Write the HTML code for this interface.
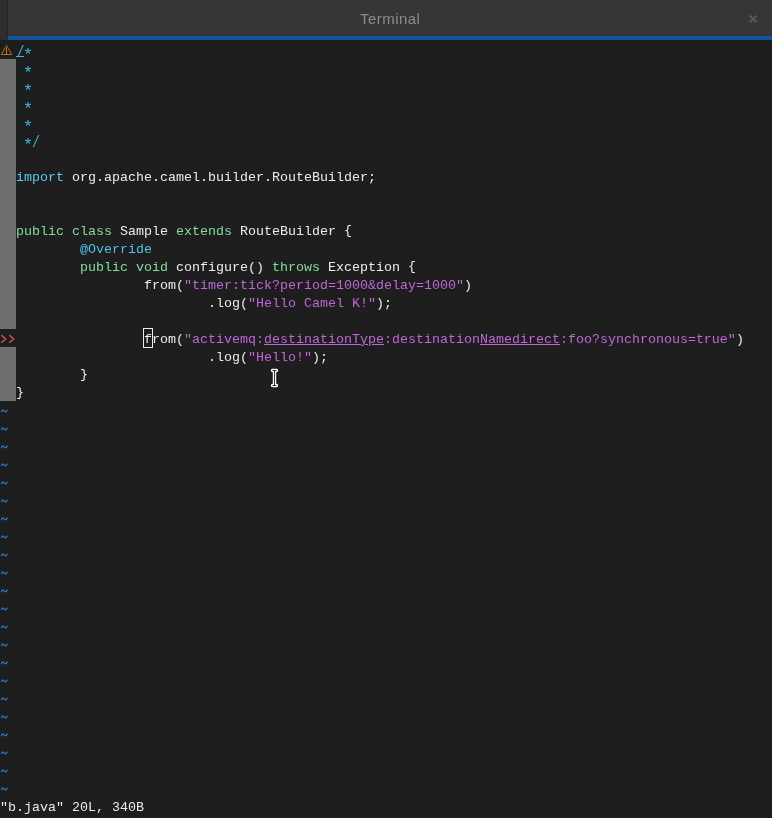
<!DOCTYPE html>
<html><head><meta charset="utf-8">
<style>
html,body{-webkit-font-smoothing:antialiased;margin:0;padding:0;width:772px;height:818px;overflow:hidden;background:#1e1e1e;}
#tbl{position:absolute;left:0;top:0;width:8px;height:40px;background:#2e2e2e;}
#tbline{position:absolute;left:7px;top:0;width:1px;height:36px;background:#222;}
#tb{position:absolute;left:8px;top:0;width:764px;height:36px;background:#363636;}
#blue{position:absolute;left:8px;top:36px;width:764px;height:4px;background:#1553a1;}
#title{will-change:transform;position:absolute;left:360px;top:1px;white-space:nowrap;font:15px "Liberation Sans",sans-serif;letter-spacing:0.45px;color:#8c8c8c;line-height:36px;}
#close{position:absolute;left:749px;top:15px;width:8px;height:8px;}
#close i{position:absolute;left:-1.2px;top:3.2px;width:10.4px;height:1.6px;border-radius:0.8px;background:#585858;transform:rotate(45deg);}
#term{will-change:transform;position:absolute;left:0;top:41px;width:772px;font-family:"Liberation Mono",monospace;font-size:13.333px;line-height:18px;color:#ececec;}
.r{height:18px;position:relative;}
.g{position:absolute;left:0;top:0;width:16px;height:18px;background:#6e6e6e;}
.t{position:absolute;left:16px;top:1.5px;white-space:pre;}
.c{color:#3db9d3;}
.k{color:#84dc9c;}
.i{color:#5cc8f0;}
.a{color:#52bfe8;}
.s{color:#c066d6;}
.u{text-decoration:underline;text-underline-offset:1px;}
.st{position:absolute;left:0;top:1.5px;white-space:pre;}
.tl{position:absolute;left:0;top:0;}
.warn{position:absolute;left:0;top:3px;}
.sg{position:absolute;left:0;top:0;}
#cur{position:absolute;left:143px;top:328px;width:8px;height:18px;border:1px solid #ececec;}
.ast{display:inline-block;transform:translateY(3.7px) scale(1.3);}
#ibeam{position:absolute;left:268px;top:366px;}
.sl{display:inline-block;transform:translate(0.6px,0.9px) scaleY(1.3);}
#ul1{position:absolute;left:16px;top:56px;width:8px;height:1px;background:#3db9d3;}
.br{display:inline-block;transform:translateY(-1px);}
.sl2{display:inline-block;transform:translateY(0.9px) scaleY(1.3);}
</style></head><body>
<div id="tbl"></div><div id="tbline"></div><div id="tb"></div><div id="blue"></div>
<div id="title">Terminal</div>
<div id="close"><i></i><i style="transform:rotate(-45deg)"></i></div>
<div id="term">
<div class="r"><svg class="warn" width="13" height="13" viewBox="0 0 13 13"><path d="M6.5 1.6L1.3 10.5H11.7Z" fill="none" stroke="#c4720f" stroke-width="0.95" stroke-linejoin="round"/><path d="M6.5 4.3V10.2" stroke="#c4720f" stroke-width="1"/></svg><span class="t"><span class="c"><span class="sl">/</span><span class="ast">*</span></span></span></div>
<div class="r"><div class="g"></div><span class="t c"> <span class="ast">*</span></span></div>
<div class="r"><div class="g"></div><span class="t c"> <span class="ast">*</span></span></div>
<div class="r"><div class="g"></div><span class="t c"> <span class="ast">*</span></span></div>
<div class="r"><div class="g"></div><span class="t c"> <span class="ast">*</span></span></div>
<div class="r"><div class="g"></div><span class="t c"> <span class="ast">*</span><span class="sl2">/</span></span></div>
<div class="r"><div class="g"></div></div>
<div class="r"><div class="g"></div><span class="t"><span class="i">import</span> org.apache.camel.builder.RouteBuilder;</span></div>
<div class="r"><div class="g"></div></div>
<div class="r"><div class="g"></div></div>
<div class="r"><div class="g"></div><span class="t"><span class="k">public</span> <span class="k">class</span> Sample <span class="k">extends</span> RouteBuilder <span class="br">{</span></span></div>
<div class="r"><div class="g"></div><span class="t">        <span class="a">@Override</span></span></div>
<div class="r"><div class="g"></div><span class="t">        <span class="k">public</span> <span class="k">void</span> configure() <span class="k">throws</span> Exception <span class="br">{</span></span></div>
<div class="r"><div class="g"></div><span class="t">                from(<span class="s">"timer:tick?period=1000&amp;delay=1000"</span>)</span></div>
<div class="r"><div class="g"></div><span class="t">                        .log(<span class="s">"Hello Camel K!"</span>);</span></div>
<div class="r"><div class="g"></div></div>
<div class="r"><svg class="sg" width="16" height="18" viewBox="0 0 16 18"><path d="M1.6 6.6L5.9 10L1.6 13.4M9.6 6.6L13.9 10L9.6 13.4" stroke="#e85b48" stroke-width="1.25" fill="none" stroke-linecap="round" stroke-linejoin="round"/></svg><span class="t">                from(<span class="s">"activemq:<span class="u">destinationType</span>:destination<span class="u">Namedirect</span>:foo?synchronous=true"</span>)</span></div>
<div class="r"><div class="g"></div><span class="t">                        .log(<span class="s">"Hello!"</span>);</span></div>
<div class="r"><div class="g"></div><span class="t">        <span class="br">}</span></span></div>
<div class="r"><div class="g"></div><span class="t"><span class="br">}</span></span></div>
<div class="r"><svg class="tl" width="8" height="18" viewBox="0 0 8 18"><path d="M1.5 10.6C2 9 3 8.6 3.9 9.6S5.4 11.3 6.3 10.6 6.8 9.4 6.9 9" stroke="#3a7acb" stroke-width="1.25" fill="none" stroke-linecap="round"/></svg></div>
<div class="r"><svg class="tl" width="8" height="18" viewBox="0 0 8 18"><path d="M1.5 10.6C2 9 3 8.6 3.9 9.6S5.4 11.3 6.3 10.6 6.8 9.4 6.9 9" stroke="#3a7acb" stroke-width="1.25" fill="none" stroke-linecap="round"/></svg></div>
<div class="r"><svg class="tl" width="8" height="18" viewBox="0 0 8 18"><path d="M1.5 10.6C2 9 3 8.6 3.9 9.6S5.4 11.3 6.3 10.6 6.8 9.4 6.9 9" stroke="#3a7acb" stroke-width="1.25" fill="none" stroke-linecap="round"/></svg></div>
<div class="r"><svg class="tl" width="8" height="18" viewBox="0 0 8 18"><path d="M1.5 10.6C2 9 3 8.6 3.9 9.6S5.4 11.3 6.3 10.6 6.8 9.4 6.9 9" stroke="#3a7acb" stroke-width="1.25" fill="none" stroke-linecap="round"/></svg></div>
<div class="r"><svg class="tl" width="8" height="18" viewBox="0 0 8 18"><path d="M1.5 10.6C2 9 3 8.6 3.9 9.6S5.4 11.3 6.3 10.6 6.8 9.4 6.9 9" stroke="#3a7acb" stroke-width="1.25" fill="none" stroke-linecap="round"/></svg></div>
<div class="r"><svg class="tl" width="8" height="18" viewBox="0 0 8 18"><path d="M1.5 10.6C2 9 3 8.6 3.9 9.6S5.4 11.3 6.3 10.6 6.8 9.4 6.9 9" stroke="#3a7acb" stroke-width="1.25" fill="none" stroke-linecap="round"/></svg></div>
<div class="r"><svg class="tl" width="8" height="18" viewBox="0 0 8 18"><path d="M1.5 10.6C2 9 3 8.6 3.9 9.6S5.4 11.3 6.3 10.6 6.8 9.4 6.9 9" stroke="#3a7acb" stroke-width="1.25" fill="none" stroke-linecap="round"/></svg></div>
<div class="r"><svg class="tl" width="8" height="18" viewBox="0 0 8 18"><path d="M1.5 10.6C2 9 3 8.6 3.9 9.6S5.4 11.3 6.3 10.6 6.8 9.4 6.9 9" stroke="#3a7acb" stroke-width="1.25" fill="none" stroke-linecap="round"/></svg></div>
<div class="r"><svg class="tl" width="8" height="18" viewBox="0 0 8 18"><path d="M1.5 10.6C2 9 3 8.6 3.9 9.6S5.4 11.3 6.3 10.6 6.8 9.4 6.9 9" stroke="#3a7acb" stroke-width="1.25" fill="none" stroke-linecap="round"/></svg></div>
<div class="r"><svg class="tl" width="8" height="18" viewBox="0 0 8 18"><path d="M1.5 10.6C2 9 3 8.6 3.9 9.6S5.4 11.3 6.3 10.6 6.8 9.4 6.9 9" stroke="#3a7acb" stroke-width="1.25" fill="none" stroke-linecap="round"/></svg></div>
<div class="r"><svg class="tl" width="8" height="18" viewBox="0 0 8 18"><path d="M1.5 10.6C2 9 3 8.6 3.9 9.6S5.4 11.3 6.3 10.6 6.8 9.4 6.9 9" stroke="#3a7acb" stroke-width="1.25" fill="none" stroke-linecap="round"/></svg></div>
<div class="r"><svg class="tl" width="8" height="18" viewBox="0 0 8 18"><path d="M1.5 10.6C2 9 3 8.6 3.9 9.6S5.4 11.3 6.3 10.6 6.8 9.4 6.9 9" stroke="#3a7acb" stroke-width="1.25" fill="none" stroke-linecap="round"/></svg></div>
<div class="r"><svg class="tl" width="8" height="18" viewBox="0 0 8 18"><path d="M1.5 10.6C2 9 3 8.6 3.9 9.6S5.4 11.3 6.3 10.6 6.8 9.4 6.9 9" stroke="#3a7acb" stroke-width="1.25" fill="none" stroke-linecap="round"/></svg></div>
<div class="r"><svg class="tl" width="8" height="18" viewBox="0 0 8 18"><path d="M1.5 10.6C2 9 3 8.6 3.9 9.6S5.4 11.3 6.3 10.6 6.8 9.4 6.9 9" stroke="#3a7acb" stroke-width="1.25" fill="none" stroke-linecap="round"/></svg></div>
<div class="r"><svg class="tl" width="8" height="18" viewBox="0 0 8 18"><path d="M1.5 10.6C2 9 3 8.6 3.9 9.6S5.4 11.3 6.3 10.6 6.8 9.4 6.9 9" stroke="#3a7acb" stroke-width="1.25" fill="none" stroke-linecap="round"/></svg></div>
<div class="r"><svg class="tl" width="8" height="18" viewBox="0 0 8 18"><path d="M1.5 10.6C2 9 3 8.6 3.9 9.6S5.4 11.3 6.3 10.6 6.8 9.4 6.9 9" stroke="#3a7acb" stroke-width="1.25" fill="none" stroke-linecap="round"/></svg></div>
<div class="r"><svg class="tl" width="8" height="18" viewBox="0 0 8 18"><path d="M1.5 10.6C2 9 3 8.6 3.9 9.6S5.4 11.3 6.3 10.6 6.8 9.4 6.9 9" stroke="#3a7acb" stroke-width="1.25" fill="none" stroke-linecap="round"/></svg></div>
<div class="r"><svg class="tl" width="8" height="18" viewBox="0 0 8 18"><path d="M1.5 10.6C2 9 3 8.6 3.9 9.6S5.4 11.3 6.3 10.6 6.8 9.4 6.9 9" stroke="#3a7acb" stroke-width="1.25" fill="none" stroke-linecap="round"/></svg></div>
<div class="r"><svg class="tl" width="8" height="18" viewBox="0 0 8 18"><path d="M1.5 10.6C2 9 3 8.6 3.9 9.6S5.4 11.3 6.3 10.6 6.8 9.4 6.9 9" stroke="#3a7acb" stroke-width="1.25" fill="none" stroke-linecap="round"/></svg></div>
<div class="r"><svg class="tl" width="8" height="18" viewBox="0 0 8 18"><path d="M1.5 10.6C2 9 3 8.6 3.9 9.6S5.4 11.3 6.3 10.6 6.8 9.4 6.9 9" stroke="#3a7acb" stroke-width="1.25" fill="none" stroke-linecap="round"/></svg></div>
<div class="r"><svg class="tl" width="8" height="18" viewBox="0 0 8 18"><path d="M1.5 10.6C2 9 3 8.6 3.9 9.6S5.4 11.3 6.3 10.6 6.8 9.4 6.9 9" stroke="#3a7acb" stroke-width="1.25" fill="none" stroke-linecap="round"/></svg></div>
<div class="r"><svg class="tl" width="8" height="18" viewBox="0 0 8 18"><path d="M1.5 10.6C2 9 3 8.6 3.9 9.6S5.4 11.3 6.3 10.6 6.8 9.4 6.9 9" stroke="#3a7acb" stroke-width="1.25" fill="none" stroke-linecap="round"/></svg></div>
<div class="r"><span class="st">"b.java" 20L, 340B</span></div>
</div>
<div id="cur"></div>
<div id="ul1"></div>
<svg id="ibeam" width="14" height="24" viewBox="0 0 14 24"><path d="M4.5 4.5H8.5M6.5 4.5V19.5M4.5 19.5H8.5" stroke="#fff" stroke-width="3.4" stroke-linecap="round" stroke-linejoin="round" fill="none"/><path d="M4.5 4.5H8.5M6.5 4.5V19.5M4.5 19.5H8.5" stroke="#000" stroke-width="0.8" fill="none"/></svg>
</body></html>
